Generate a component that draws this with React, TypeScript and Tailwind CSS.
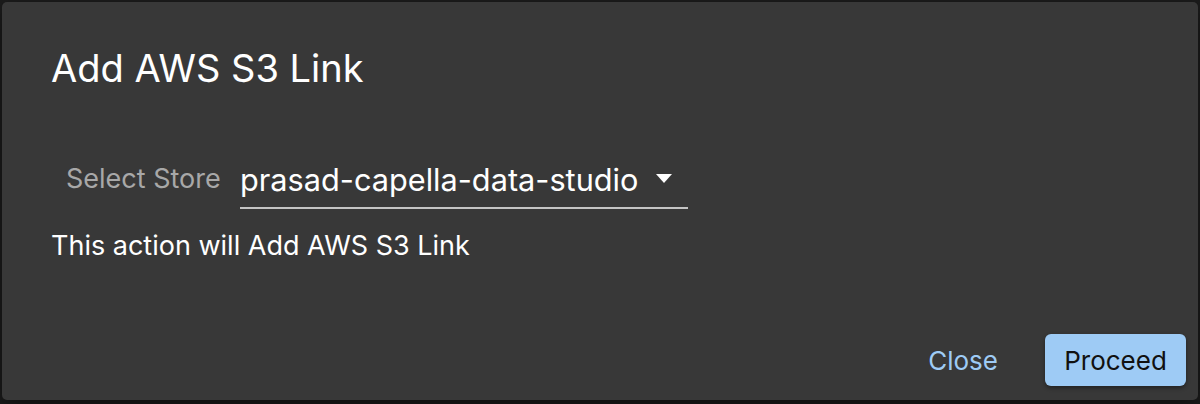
const font = { fontFamily: "Inter, 'Noto Sans', sans-serif" };

export default function App() {
  return (
    <div className="w-[1200px] h-[404px] bg-[#1c1c1c] p-[2px] pb-[4px]" style={font}>
      <div className="h-full rounded-[5px] bg-[#383838] flex flex-col shadow-[0_8px_24px_rgba(0,0,0,0.5)]">
        {/* header */}
        <h2 className="pl-[49px] pt-[44px] text-[38px] leading-[44px] text-white font-normal">
          Add AWS S3 Link
        </h2>

        {/* body */}
        <div className="pl-[49px] pt-[71px] flex flex-col">
          <div className="flex items-start">
            <span className="ml-[15px] w-[174px] text-[27px] leading-[36px] text-[#a8a8a8]">Select Store</span>
            <div className="w-[448px] border-b-2 border-[#c4c4c4] flex items-center justify-between pb-[8px]">
              <span className="text-[30.7px] leading-[38px] text-white">prasad-capella-data-studio</span>
              <span className="mr-[16px] mt-[-4px] w-0 h-0 border-l-[8px] border-r-[8px] border-t-[9px] border-l-transparent border-r-transparent border-t-white" />
            </div>
          </div>
          <p className="mt-[20px] text-[27px] leading-[34px] text-white">This action will Add AWS S3 Link</p>
        </div>

        {/* actions */}
        <div className="mt-auto flex justify-end items-center gap-[47px] pr-[12px] pb-[14px]">
          <button className="text-[26px] text-[#9ecbf5]">Close</button>
          <button className="h-[52px] w-[141px] rounded-[6px] bg-[#9ecbf5] text-[26px] text-[#111] shadow-[0_2px_4px_rgba(0,0,0,0.4)]">
            Proceed
          </button>
        </div>
      </div>
    </div>
  );
}
